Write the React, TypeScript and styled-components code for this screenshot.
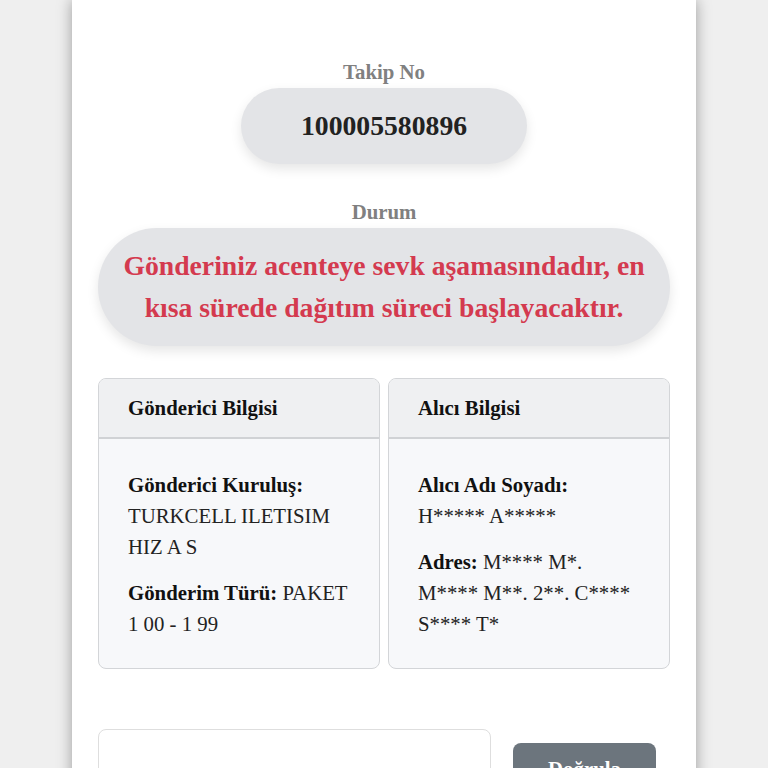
import React from 'react';
import styled, { createGlobalStyle } from 'styled-components';

const GlobalStyle = createGlobalStyle`
  html, body {
    margin: 0;
    padding: 0;
    background: #efefef;
  }
  body {
    font-family: "Liberation Serif", "Times New Roman", serif;
    color: #222;
  }
`;

const Page = styled.div`
  width: 624px;
  margin: 0 auto;
  min-height: 100vh;
  box-sizing: border-box;
  padding: 59px 26px 40px;
  background: #fff;
  box-shadow: 0 0 14px rgba(0, 0, 0, 0.35);
  text-align: center;
`;

const Label = styled.div<{ top?: number }>`
  font-size: 20.8px;
  line-height: 25px;
  font-weight: 700;
  color: #808080;
  margin-top: ${props => props.top || 0}px;
  margin-bottom: 4px;
`;

const NumberPill = styled.div`
  display: inline-block;
  padding: 20px 60px;
  border-radius: 40px;
  background: #e3e4e7;
  box-shadow: 0 5px 12px rgba(0, 0, 0, 0.1);
  font-size: 27.7px;
  line-height: 36px;
  font-weight: 700;
  color: #222;
`;

const StatusPill = styled.div`
  padding: 17px 20px;
  border-radius: 60px;
  background: #e3e4e7;
  box-shadow: 0 5px 12px rgba(0, 0, 0, 0.1);
  font-size: 27.7px;
  line-height: 42px;
  font-weight: 700;
  color: #d43a4f;
`;

const InfoGrid = styled.div`
  display: grid;
  grid-template-columns: 1fr 1fr;
  gap: 8px;
  margin-top: 32px;
  text-align: left;
`;

const InfoCard = styled.div`
  border: 1px solid #d3d5d8;
  border-radius: 8px;
  background: #f7f8fa;
  overflow: hidden;
`;

const CardHeader = styled.div`
  height: 60px;
  box-sizing: border-box;
  padding: 0 29px;
  display: flex;
  align-items: center;
  background: #eff0f2;
  border-bottom: 2px solid #d0d2d5;
  font-size: 20.8px;
  font-weight: 700;
  color: #111;
`;

const CardBody = styled.div`
  padding: 30px 29px 29px;
  font-size: 20.8px;
  line-height: 31px;
  color: #222;
`;

const Field = styled.p`
  margin: 0 0 15px;

  &:last-child {
    margin-bottom: 0;
  }

  strong {
    color: #111;
  }
`;

const ActionRow = styled.div`
  display: flex;
  align-items: center;
  margin-top: 60px;
`;

const CodeInput = styled.input`
  width: 393px;
  height: 76px;
  box-sizing: border-box;
  border: 1px solid #dedede;
  border-radius: 8px;
  background: #fff;
  font-family: inherit;
  font-size: 20px;
  padding: 0 16px;
`;

const VerifyButton = styled.button`
  width: 143px;
  height: 48px;
  margin-left: 22px;
  padding: 4px 0 0;
  border: none;
  border-radius: 8px;
  background: #6c757d;
  color: #fff;
  font-family: inherit;
  font-size: 20.8px;
  font-weight: 700;
`;

export default function App() {
  return (
    <>
      <GlobalStyle />
      <Page>
        <Label>Takip No</Label>
        <NumberPill>100005580896</NumberPill>

        <Label top={35}>Durum</Label>
        <StatusPill>
          Gönderiniz acenteye sevk aşamasındadır, en kısa sürede dağıtım süreci başlayacaktır.
        </StatusPill>

        <InfoGrid>
          <InfoCard>
            <CardHeader>Gönderici Bilgisi</CardHeader>
            <CardBody>
              <Field>
                <strong>Gönderici Kuruluş:</strong> TURKCELL ILETISIM HIZ A S
              </Field>
              <Field>
                <strong>Gönderim Türü:</strong> PAKET 1 00 - 1 99
              </Field>
            </CardBody>
          </InfoCard>
          <InfoCard>
            <CardHeader>Alıcı Bilgisi</CardHeader>
            <CardBody>
              <Field>
                <strong>Alıcı Adı Soyadı:</strong> H***** A*****
              </Field>
              <Field>
                <strong>Adres:</strong> M**** M*. M**** M**. 2**. C**** S**** T*
              </Field>
            </CardBody>
          </InfoCard>
        </InfoGrid>

        <ActionRow>
          <CodeInput type="text" />
          <VerifyButton>Doğrula</VerifyButton>
        </ActionRow>
      </Page>
    </>
  );
}
